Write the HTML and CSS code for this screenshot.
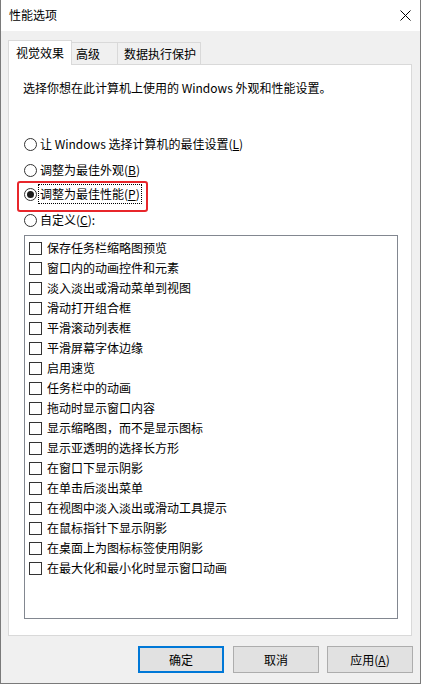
FILE: index.html
```
<!DOCTYPE html>
<html lang="zh-CN">
<head>
<meta charset="utf-8">
<title>性能选项</title>
<link rel="stylesheet" href="styles.css">
</head>
<body>
<div class="window">
  <div class="titlebar">
    <span class="title">性能选项</span>
    <svg class="close" width="11" height="11" viewBox="0 0 11 11"><path d="M0.5 0.5 L10.5 10.5 M10.5 0.5 L0.5 10.5" stroke="#000" stroke-width="1" fill="none"/></svg>
  </div>
  <div class="body">
    <div class="tabs">
      <div class="tab active">视觉效果</div>
      <div class="tab t2">高级</div>
      <div class="tab t3">数据执行保护</div>
    </div>
    <div class="panel">
      <p class="desc">选择你想在此计算机上使用的 Windows 外观和性能设置。</p>
      <div class="radio r1"><span class="circle"></span><span class="rlabel">让 Windows 选择计算机的最佳设置(<u>L</u>)</span></div>
      <div class="radio r2"><span class="circle"></span><span class="rlabel">调整为最佳外观(<u>B</u>)</span></div>
      <div class="radio r3"><span class="circle checked"></span><span class="rlabel focus">调整为最佳性能(<u>P</u>)</span></div>
      <div class="radio r4"><span class="circle"></span><span class="rlabel">自定义(<u>C</u>):</span></div>
      <div class="list">
        <div class="item"><span class="box"></span>保存任务栏缩略图预览</div>
        <div class="item"><span class="box"></span>窗口内的动画控件和元素</div>
        <div class="item"><span class="box"></span>淡入淡出或滑动菜单到视图</div>
        <div class="item"><span class="box"></span>滑动打开组合框</div>
        <div class="item"><span class="box"></span>平滑滚动列表框</div>
        <div class="item"><span class="box"></span>平滑屏幕字体边缘</div>
        <div class="item"><span class="box"></span>启用速览</div>
        <div class="item"><span class="box"></span>任务栏中的动画</div>
        <div class="item"><span class="box"></span>拖动时显示窗口内容</div>
        <div class="item"><span class="box"></span>显示缩略图，而不是显示图标</div>
        <div class="item"><span class="box"></span>显示亚透明的选择长方形</div>
        <div class="item"><span class="box"></span>在窗口下显示阴影</div>
        <div class="item"><span class="box"></span>在单击后淡出菜单</div>
        <div class="item"><span class="box"></span>在视图中淡入淡出或滑动工具提示</div>
        <div class="item"><span class="box"></span>在鼠标指针下显示阴影</div>
        <div class="item"><span class="box"></span>在桌面上为图标标签使用阴影</div>
        <div class="item"><span class="box"></span>在最大化和最小化时显示窗口动画</div>
      </div>
    </div>
    <div class="buttons">
      <div class="btn default">确定</div>
      <div class="btn b2">取消</div>
      <div class="btn b3">应用(<u>A</u>)</div>
    </div>
  </div>
  <div class="highlight"></div>
</div>
</body>
</html>
```
FILE: styles.css
```
* { box-sizing: border-box; }
html, body { margin: 0; padding: 0; background: #ffffff; }
body {
  width: 421px;
  height: 685px;
  font-family: "Noto Sans CJK SC", "Noto Sans", sans-serif;
  font-size: 12px;
  color: #000;
  overflow: hidden;
}
.window {
  position: relative;
  width: 421px;
  height: 684px;
  border-left: 1px solid #7a7a7a;
  border-right: 1px solid #7a7a7a;
  border-bottom: 1px solid #7a7a7a;
  background: #f0f0f0;
  display: flex;
  flex-direction: column;
}
.titlebar {
  height: 31px;
  background: #ffffff;
  display: flex;
  align-items: center;
  justify-content: space-between;
  padding: 0 9px 0 8px;
}
.title { line-height: 16px; margin-top: -1px; }
.close { display: block; margin-top: -1px; }
.body {
  flex: 1;
  padding: 9px 0 0 7px;
  display: flex;
  flex-direction: column;
}
.tabs {
  display: flex;
  align-items: flex-end;
  height: 25px;
  margin-bottom: -1px;
  position: relative;
  z-index: 1;
}
.tab {
  display: flex;
  align-items: center;
  line-height: 16px;
  border: 1px solid #d9d9d9;
  border-bottom: 0;
  background: #f0f0f0;
  height: 22px;
  margin-bottom: 1px;
}
.tab.active {
  background: #ffffff;
  height: 25px;
  margin-bottom: 0;
  padding: 0 7px;
  width: 64px;
}
.t2 { border-left: 0; width: 46px; padding-left: 4px; }
.t3 { border-left: 0; width: 83px; padding-left: 6px; }
.panel {
  width: 404px;
  height: 572px;
  background: #ffffff;
  border: 1px solid #d9d9d9;
  padding-top: 15px;
}
.desc {
  margin: 0 0 0 14px;
  line-height: 16px;
}
.radio {
  display: flex;
  align-items: center;
  height: 20px;
  margin-left: 15px;
  line-height: 16px;
}
.r1 { margin-top: 38px; }
.r2 { margin-top: 6px; }
.r3 { margin-top: 4px; }
.r4 { margin-top: 6px; }
.circle {
  width: 13px;
  height: 13px;
  border: 1px solid #333;
  border-radius: 50%;
  margin-right: 3px;
  display: flex;
  align-items: center;
  justify-content: center;
  flex: none;
}
.circle.checked::after {
  content: "";
  width: 7px;
  height: 7px;
  border-radius: 50%;
  background: #1a1a1a;
}
.rlabel u { text-decoration: underline; text-underline-offset: 1px; }
.focus {
  border: 1px dotted #000;
  padding: 1px 1px;
  margin-left: -2px;
}
.list {
  margin: 5px 0 0 15px;
  width: 374px;
  height: 384px;
  border: 1px solid #828790;
  padding: 2px 0 0 4px;
}
.item {
  height: 20px;
  display: flex;
  align-items: center;
  line-height: 16px;
}
.box {
  width: 13px;
  height: 13px;
  border: 1px solid #333;
  margin-right: 5px;
  flex: none;
}
.buttons {
  display: flex;
  justify-content: flex-end;
  gap: 9px;
  margin-top: 10px;
  padding-right: 7px;
}
.btn {
  width: 86px;
  height: 27px;
  background: #e1e1e1;
  border: 1px solid #adadad;
  display: flex;
  align-items: center;
  justify-content: center;
  line-height: 16px;
}
.btn.default { border: 2px solid #0078d7; }
.b3 { margin-left: -1px; }
.highlight {
  position: absolute;
  left: 16px;
  top: 181px;
  width: 131px;
  height: 31px;
  border: 2.5px solid #e8262b;
  border-radius: 3px;
  pointer-events: none;
}
```
